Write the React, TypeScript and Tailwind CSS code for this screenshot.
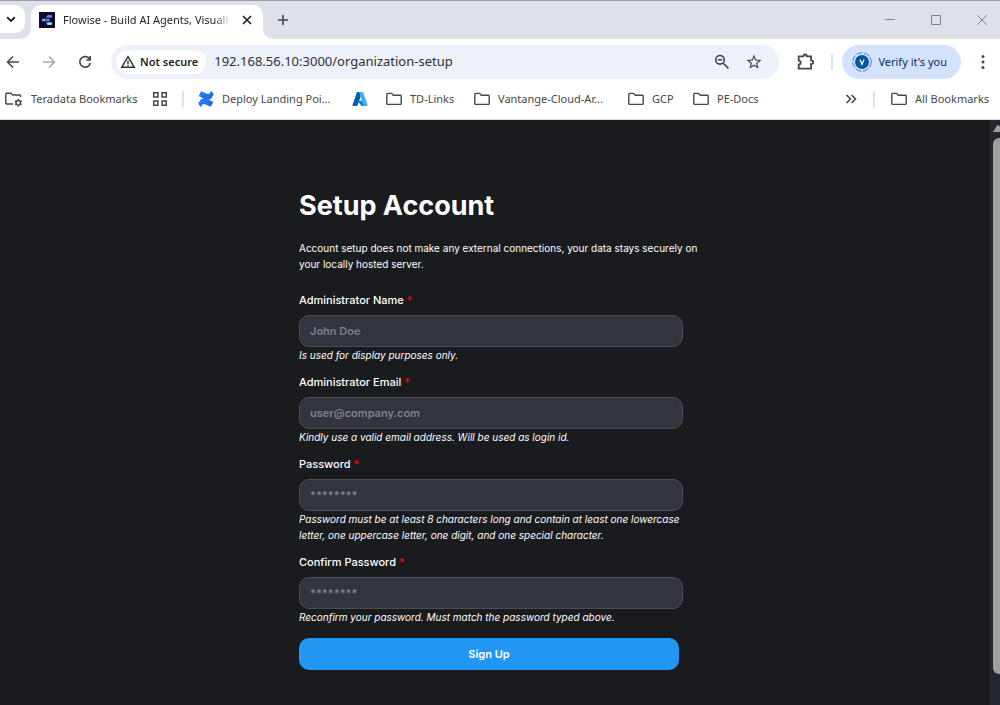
import type { ReactNode } from "react";
import { MdOutlineStarBorder } from "react-icons/md";

function FolderIcon() {
  return (
    <svg className="h-4 w-4 shrink-0" viewBox="0 0 16 16" fill="none" stroke="#474747" strokeWidth="1.4" strokeLinejoin="round" aria-hidden="true">
      <path d="M.8 3.2c0-.5.3-.8.8-.8h4l1.6 1.8h7.2c.5 0 .8.3.8.8v7.6c0 .5-.3.8-.8.8H1.6c-.5 0-.8-.3-.8-.8z" />
    </svg>
  );
}

function ManagedFolderIcon() {
  return (
    <svg className="h-[18px] w-[18px] shrink-0" viewBox="0 0 18 18" fill="none" stroke="#474747" strokeWidth="1.4" strokeLinejoin="round" aria-hidden="true">
      <path d="M8 14H1.8c-.6 0-1-.4-1-1V4.2c0-.6.4-1 1-1h4L7.600 5h7c.6 0 1 .4 1 1v1" />
      <circle cx="13.300" cy="12.800" r="2.300" />
      <path d="M13.300 9v1.400M13.300 15.200v1.500M10 10.900l1.200.7M15.400 14l1.200.7M10 14.700l1.200-.7M15.400 11.600l1.200-.7" />
    </svg>
  );
}

function AppsIcon() {
  return (
    <svg className="h-4 w-4" viewBox="0 0 16 16" fill="none" stroke="#474747" strokeWidth="1.500" aria-hidden="true">
      <path d="M1.700 1.700h4.200v4.200H1.700zM10.100 1.700h4.200v4.200h-4.200zM1.700 10.100h4.200v4.200H1.700zM10.100 10.100h4.200v4.200h-4.200z" />
    </svg>
  );
}

function ConfluenceIcon() {
  return (
    <svg className="h-4 w-4 shrink-0" viewBox="0 0 16 16" aria-hidden="true">
      <defs>
        <linearGradient id="conf-a" x1="1" y1="1" x2="0" y2="0"><stop stopColor="#1868db" /><stop offset="1" stopColor="#2684ff" /></linearGradient>
      </defs>
      <path fill="url(#conf-a)" d="M.6 12.100 2 9.800c2.300-3.500 5-2.700 8.400-1.200l4.200 2c.4.200.5.500.4.800l-1.800 3.900c-.2.400-.6.500-1 .3C7 13.200 5.300 12.100 4 14.200l-.9 1.400c-.2.300-.6.400-.9.200L.5 13c-.2-.3-.2-.6.1-.9z" />
      <path fill="url(#conf-a)" d="M15.400 3.900 14 6.200c-2.300 3.500-5 2.700-8.400 1.200l-4.200-2c-.4-.2-.5-.5-.4-.8L2.800.7c.2-.4.600-.500 1-.3C9 2.800 10.700 3.900 12 1.800l.9-1.400c.2-.3.600-.4.900-.2L15.500 3c.2.300.2.600-.1.900z" />
    </svg>
  );
}

function AzureIcon() {
  return (
    <svg className="h-4 w-4" viewBox="0 0 16 16" aria-hidden="true">
      <path fill="#0b5ea8" d="M5.600 1h4.700L5.500 14.500c-.1.300-.4.500-.8.500H1.300c-.6 0-1-.5-.8-1.100L4.800 1.500c.1-.3.400-.5.800-.5z" />
      <path fill="#0f7bd1" d="M5.200 9.800h6.500l1.800 5.200H9.700z" />
      <path fill="#36b5ee" d="M6.500 1h4c.3 0 .6.200.7.500l4.300 12.400c.2.600-.2 1.100-.8 1.100h-4.100c.6 0 1-.5.8-1.100L7.200 1.500c-.1-.3-.4-.5-.7-.5z" />
    </svg>
  );
}

function FlowiseIcon() {
  return (
    <svg className="h-4 w-4 shrink-0" viewBox="0 0 16 16" aria-hidden="true">
      <rect width="16" height="16" fill="#12092f" />
      <path d="M5 8h5M7.500 8V4.500h2M7.500 8v3.700h2" stroke="#3d6fa8" strokeWidth=".8" fill="none" />
      <rect x="3" y="6.800" width="3.600" height="2.400" rx=".8" fill="#66b7ff" />
      <rect x="8" y="3" width="5" height="2.800" rx="1" fill="#7673f5" />
      <rect x="8" y="7" width="2.600" height="2" rx=".7" fill="#52b0d0" />
      <rect x="8" y="10.200" width="5" height="2.800" rx="1" fill="#8ce0f5" />
    </svg>
  );
}

function Stroke({ label, d, color = "#474747", width = 1.6, className = "h-4 w-4" }: { label: string; d: string; color?: string; width?: number; className?: string }) {
  return (
    <button type="button" aria-label={label} className="shrink-0">
      <svg className={className} viewBox="0 0 16 16" fill="none" stroke={color} strokeWidth={width} aria-hidden="true">
        <path d={d} />
      </svg>
    </button>
  );
}

function Bookmark({ icon, children, className = "" }: { icon: ReactNode; children: ReactNode; className?: string }) {
  return (
    <a href="#" className={`flex shrink-0 items-center gap-2 whitespace-nowrap ${className}`}>
      {icon}
      <span>{children}</span>
    </a>
  );
}

function TabStrip() {
  return (
    <div className="flex h-[39px] items-end border-t border-[#9a9da3] bg-[#dee1e9]">
      <div className="flex h-[34px] w-[31px] shrink-0 items-start bg-white">
        <div className="flex h-full w-full items-start rounded-br-[10px] bg-[#dee1e9]">
          <button type="button" aria-label="Search tabs" className="flex h-7 w-[25px] items-center rounded-r-[10px] bg-white pl-[3px]">
            <svg className="h-4 w-4" viewBox="0 0 16 16" fill="none" stroke="#202124" strokeWidth="1.900" aria-hidden="true"><path d="m4.200 6.200 3.800 3.700 3.800-3.700" /></svg>
          </button>
        </div>
      </div>
      <div className="flex h-[34px] w-[232px] shrink-0 items-center rounded-t-[10px] bg-white pr-2 pb-1 pl-2">
        <FlowiseIcon />
        <span className="ml-2 w-[168px] overflow-hidden mask-r-from-90% whitespace-nowrap text-[#1f1f1f]">Flowise - Build AI Agents, Visually</span>
        <span className="ml-auto flex"><Stroke label="Close tab" d="m4 4 8 8M12 4l-8 8" color="#1f1f1f" width={1.7} /></span>
      </div>
      <div className="h-[34px] flex-1 bg-white">
        <div className="flex h-full items-center rounded-bl-[10px] bg-[#dee1e9] pr-[10px] pb-[5px] pl-3">
          <Stroke label="New tab" d="M8 3v10M3 8h10" />
          <div className="ml-auto flex items-center gap-[30px]">
            <Stroke label="Minimize" d="M3 7.500h10" color="#858689" width={1} />
            <Stroke label="Maximize" d="M3.500 3.500h9v9h-9z" color="#858689" width={1} />
            <Stroke label="Close window" d="m3 3 10 10M13 3 3 13" color="#858689" width={1} />
          </div>
        </div>
      </div>
    </div>
  );
}

function Toolbar() {
  return (
    <div className="flex h-[46px] items-center pr-[9px] pl-[5px]">
      <div className="flex items-center gap-5">
        <Stroke label="Back" d="M14 8H3M8 2.500 2.500 8 8 13.500" />
        <Stroke label="Forward" d="M2 8h11M8 2.500 13.500 8 8 13.500" color="#a9a9a9" />
        <Stroke label="Reload" d="M12.800 5.400A5.300 5.300 0 1 0 13.300 9M13.200 2v4H9.200" />
      </div>
      <div className="ml-[18px] flex h-[34px] flex-1 items-center rounded-full bg-[#edf1fa] pr-4 pl-[5px]">
        <button type="button" className="flex h-6 shrink-0 items-center gap-1 rounded-full bg-white pr-2 pl-1 text-[#1f1f1f]">
          <svg className="h-4 w-4" viewBox="0 0 16 16" fill="none" stroke="#303030" strokeWidth="1.400" aria-hidden="true">
            <path d="M8 2.600 14.300 13.300H1.700zM8 6.400v3.500M8 10.700v1.300" />
          </svg>
          <span className="font-semibold">Not secure</span>
        </button>
        <input aria-label="Address" defaultValue="192.168.56.10:3000/organization-setup" className="ml-2 min-w-0 flex-1 bg-transparent text-[13px] text-[#303030] outline-none" />
        <Stroke label="Zoom" d="M6 1.500a4.300 4.300 0 1 0 0 8.600 4.300 4.300 0 0 0 0-8.600zM9.200 9.200l5.200 5.200M3.800 5.800h4.400" />
        <button type="button" aria-label="Bookmark this page" className="ml-[15px] text-[#474747]"><MdOutlineStarBorder className="h-[18px] w-[18px]" /></button>
      </div>
      <div className="ml-[18px] flex">
        <Stroke label="Extensions" className="h-[18px] w-[18px]" d="M1.500 3h4.300c0-2.200 3-2.200 3 0h3.700v3.600c2.500 0 2.500 3.200 0 3.200v4h-11V10.300c2.400 0 2.400-3.500 0-3.500z" />
      </div>
      <span className="ml-4 h-4 w-[2px] bg-[#d3e3fd]" />
      <button type="button" className="ml-[9px] flex h-[34px] shrink-0 items-center gap-[6px] rounded-full bg-[#d3e3fd] pr-[14px] pl-[10px] text-[#0a2a5e]">
        <svg className="h-5 w-5" viewBox="0 0 20 20" aria-hidden="true">
          <circle cx="10" cy="10" r="9.200" fill="none" stroke="#477bb5" strokeWidth="1" strokeDasharray="6 1.500" />
          <circle cx="10" cy="10" r="7" fill="#06579f" />
          <path d="m8 7.500 2 5 2-5" stroke="#fff" fill="none" strokeWidth="1.200" />
        </svg>
        Verify it's you
      </button>
      <button type="button" aria-label="Menu" className="ml-[14px]">
        <svg className="h-4 w-4" viewBox="0 0 16 16" fill="#474747" aria-hidden="true"><circle cx="8" cy="2.500" r="1.500" /><circle cx="8" cy="8" r="1.500" /><circle cx="8" cy="13.500" r="1.500" /></svg>
      </button>
    </div>
  );
}

function BookmarksBar() {
  return (
    <nav aria-label="Bookmarks" className="flex h-[35px] items-center border-b border-[#dcdcdf] pr-[9px] pb-[6px] pl-[5px] text-[#474747]">
      <Bookmark icon={<ManagedFolderIcon />} className="w-[132px]">Teradata Bookmarks</Bookmark>
      <a href="#" aria-label="Apps" className="ml-[15px]"><AppsIcon /></a>
      <span className="ml-[14px] h-4 w-[2px] bg-[#d3e3fd]" />
      <Bookmark icon={<ConfluenceIcon />} className="ml-[14px] w-[136px]">Deploy Landing Poi...</Bookmark>
      <a href="#" aria-label="Azure" className="ml-[18px]"><AzureIcon /></a>
      <Bookmark icon={<FolderIcon />} className="ml-[18px] w-[70px]">TD-Links</Bookmark>
      <Bookmark icon={<FolderIcon />} className="ml-[18px] w-[136px]">Vantange-Cloud-Ar...</Bookmark>
      <Bookmark icon={<FolderIcon />} className="ml-[18px] w-[47px]">GCP</Bookmark>
      <Bookmark icon={<FolderIcon />} className="ml-[18px]">PE-Docs</Bookmark>
      <span className="ml-auto flex">
        <Stroke label="More bookmarks" d="m3.500 4 4 4-4 4M8.500 4l4 4-4 4" />
      </span>
      <span className="ml-[14px] h-4 w-[2px] bg-[#d3e3fd]" />
      <Bookmark icon={<FolderIcon />} className="ml-4 w-[100px]">All Bookmarks</Bookmark>
    </nav>
  );
}

function Field({ id, label, hint, placeholder, type }: { id: string; label: string; hint: string; placeholder: string; type: string }) {
  return (
    <div>
      <label htmlFor={id} className="block text-[11px] leading-4 font-medium">
        {label} <span className="text-[#f00]">*</span>
      </label>
      <input id={id} type={type} placeholder={placeholder} className="mt-[7px] block h-8 w-full rounded-[10px] border border-[#4b4d53] bg-[#32353d] px-[10px] text-[11px] font-semibold text-white outline-none placeholder:text-[#808287]" />
      <p className="text-[10px] leading-4 italic">{hint}</p>
    </div>
  );
}

const fields = [
  { id: "name", label: "Administrator Name", type: "text", placeholder: "John Doe", hint: "Is used for display purposes only." },
  { id: "email", label: "Administrator Email", type: "email", placeholder: "user@company.com", hint: "Kindly use a valid email address. Will be used as login id." },
  { id: "password", label: "Password", type: "password", placeholder: "********", hint: "Password must be at least 8 characters long and contain at least one lowercase letter, one uppercase letter, one digit, and one special character." },
  { id: "confirm", label: "Confirm Password", type: "password", placeholder: "********", hint: "Reconfirm your password. Must match the password typed above." },
];

export default function App() {
  return (
    <div className="flex min-h-screen flex-col bg-[#1a1b1f]">
      <header className="bg-white font-['Noto_Sans',sans-serif] text-[11px]">
        <TabStrip />
        <Toolbar />
        <BookmarksBar />
      </header>
      <div className="flex flex-1">
        <main className="flex-1 px-4 pt-[68px] pb-[35px] font-['Inter',sans-serif] text-white">
          <form className="mx-auto max-w-[392px]">
            <h1 className="text-[27px] leading-9 font-bold">Setup Account</h1>
            <p className="-mr-4 mt-4 text-[10px] leading-4">
              Account setup does not make any external connections, your data stays securely on your locally hosted server.
            </p>
            <div className="mt-5 flex flex-col gap-[11px] pr-2">
              {fields.map((field) => (
                <Field key={field.id} {...field} />
              ))}
            </div>
            <div className="mt-[13px] pr-3">
              <button type="button" className="h-8 w-full rounded-[10px] bg-[#2196f3] text-[11px] font-semibold">Sign Up</button>
            </div>
          </form>
        </main>
        <div className="flex w-[10px] shrink-0 flex-col items-end bg-[#24262e] pt-1" aria-hidden="true">
          <svg className="h-[10px] w-[7px]" viewBox="0 0 7 10"><path d="M0 8 4 1.500q1-1 2 0L7 3v5z" fill="#9f9f9f" /></svg>
          <div className="mt-1 mb-[31px] w-[7px] flex-1 rounded-l-md bg-[#9f9f9f]" />
        </div>
      </div>
    </div>
  );
}
